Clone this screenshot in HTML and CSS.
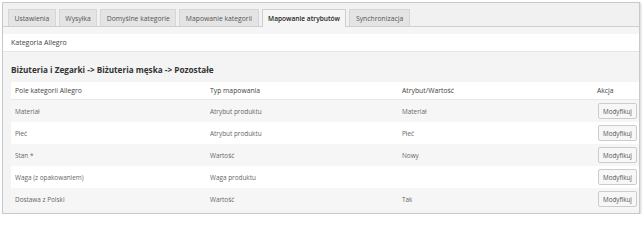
FILE: index.html
```html
<!DOCTYPE html>
<html lang="pl">
<head>
<meta charset="utf-8">
<title>Mapowanie atrybutów</title>
<link rel="stylesheet" href="styles.css">
</head>
<body>
<div class="panel">
  <div class="tabs">
    <span class="tab">Ustawienia</span>
    <span class="tab">Wysyłka</span>
    <span class="tab">Domyślne kategorie</span>
    <span class="tab">Mapowanie kategorii</span>
    <span class="tab active">Mapowanie atrybutów</span>
    <span class="tab">Synchronizacja</span>
  </div>
  <div class="strip"></div>
  <div class="band">Kategoria Allegro</div>
  <div class="content">
    <h2 class="heading">Biżuteria i Zegarki -&gt; Biżuteria męska -&gt; Pozostałe</h2>
    <table class="grid">
      <thead>
        <tr>
          <th class="c1">Pole kategorii Allegro</th>
          <th class="c2">Typ mapowania</th>
          <th class="c3">Atrybut/Wartość</th>
          <th class="c4">Akcja</th>
        </tr>
      </thead>
      <tbody>
        <tr class="odd"><td>Materiał</td><td>Atrybut produktu</td><td>Materiał</td><td><button class="btn">Modyfikuj</button></td></tr>
        <tr><td>Płeć</td><td>Atrybut produktu</td><td>Płeć</td><td><button class="btn">Modyfikuj</button></td></tr>
        <tr class="odd"><td>Stan *</td><td>Wartość</td><td>Nowy</td><td><button class="btn">Modyfikuj</button></td></tr>
        <tr><td>Waga (z opakowaniem)</td><td>Waga produktu</td><td></td><td><button class="btn">Modyfikuj</button></td></tr>
        <tr class="odd"><td>Dostawa z Polski</td><td>Wartość</td><td>Tak</td><td><button class="btn">Modyfikuj</button></td></tr>
      </tbody>
    </table>
  </div>
</div>
</body>
</html>
```

FILE: styles.css
```css
html, body {
  margin: 0;
  padding: 0;
  background: #ffffff;
}
body {
  padding: 2px 0 0 2px;
  font-family: "Open Sans", "DejaVu Sans", sans-serif;
}
.panel {
  width: 636px;
  border: 1px solid #c9c9c9;
  background: #f1f1f1;
  box-shadow: 1px 1px 2px rgba(0, 0, 0, 0.18);
}
.tabs {
  display: flex;
  gap: 3px;
  padding: 6px 0 0 5px;
  border-bottom: 1px solid #cfcfcf;
  height: 17px;
}
.tab {
  display: flex;
  align-items: center;
  padding: 0 5.5px;
  height: 17px;
  box-sizing: border-box;
  background: #e4e4e4;
  border: 1px solid #d6d6d6;
  border-bottom: none;
  font-size: 6.8px;
  color: #555;
}
.tab.active {
  background: #f5f5f5;
  color: #222;
  font-weight: 600;
  font-size: 6.6px;
  height: 18px;
  border-color: #cfcfcf;
}
.strip {
  height: 7px;
  background: #f5f5f5;
}
.band {
  height: 18px;
  box-sizing: border-box;
  display: flex;
  align-items: center;
  padding-left: 8px;
  background: #ffffff;
  border-bottom: 1px solid #e6e6e6;
  font-size: 7px;
  color: #444;
}
.content {
  background: #f4f4f4;
  padding: 12px 0 3px 8px;
}
.heading {
  margin: 0 0 6px 0;
  font-size: 8.2px;
  line-height: 12px;
  font-weight: 700;
  color: #333;
}
.grid {
  width: 628px;
  border-collapse: collapse;
  table-layout: fixed;
}
.grid th {
  background: #ffffff;
  height: 17px;
  padding: 0 4px;
  text-align: left;
  font-weight: 400;
  font-size: 6.8px;
  color: #444;
  border-bottom: 1px solid #e8e8e8;
}
.c1 { width: 187px; }
.c2 { width: 184px; }
.c3 { width: 187px; }
.c4 { width: 38px; }
.grid td {
  height: 22px;
  padding: 0 4px;
  font-size: 6.4px;
  color: #666;
  background: #ffffff;
}
.grid tr.odd td {
  background: #f6f6f6;
}
.btn {
  font-family: "Open Sans", "DejaVu Sans", sans-serif;
  font-size: 6.3px;
  color: #555;
  background: #f7f7f7;
  border: 1px solid #cccccc;
  border-radius: 2px;
  height: 16px;
  width: 39px;
  padding: 0;
  display: block;
  margin-left: 1px;
}
```
